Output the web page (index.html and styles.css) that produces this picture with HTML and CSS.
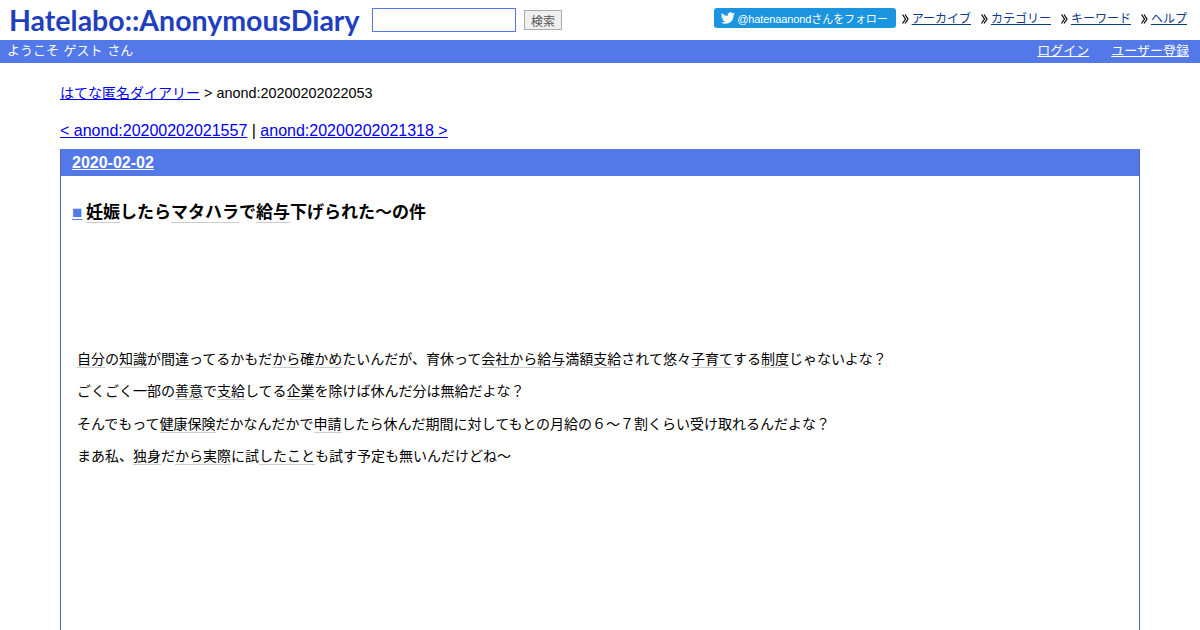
FILE: index.html
```html
<!DOCTYPE html>
<html lang="ja">
<head>
<meta charset="UTF-8">
<title>anond:20200202022053</title>
<link rel="stylesheet" href="styles.css">
</head>
<body>
<div class="top">
  <div class="top-left">
    <a class="logo" href="#">Hatelabo::AnonymousDiary</a>
    <form class="search">
      <input class="search-text" type="text">
      <button class="search-btn" type="button">検索</button>
    </form>
  </div>
  <div class="top-right">
    <a class="follow" href="#">
      <svg class="bird" viewBox="0 0 24 24"><path d="M23.6 4.6c-.9.4-1.8.7-2.8.8 1-.6 1.8-1.5 2.1-2.7-.9.6-2 1-3.1 1.2A4.9 4.9 0 0 0 11.4 8.400C7.400 8.200 3.800 6.300 1.400 3.300c-1.300 2.200-.7 5.100 1.500 6.500-.8 0-1.500-.2-2.200-.6 0 2.300 1.600 4.400 3.900 4.900-.7.2-1.500.2-2.200.1.600 2 2.400 3.400 4.600 3.400A9.900 9.900 0 0 1 0 19.600 14 14 0 0 0 7.500 21.800c9.100 0 14.300-7.700 14-14.600 1-.7 1.800-1.600 2.100-2.600z"/></svg>
      <span>@hatenaanondさんをフォロー</span>
    </a>
    <ul class="menu">
      <li><svg class="arrow" viewBox="0 0 7 10"><path d="M.5 .5L3.500 5 .5 9.500M3 .5L6 5 3 9.500"/></svg><a href="#">アーカイブ</a></li>
      <li><svg class="arrow" viewBox="0 0 7 10"><path d="M.5 .5L3.500 5 .5 9.500M3 .5L6 5 3 9.500"/></svg><a href="#">カテゴリー</a></li>
      <li><svg class="arrow" viewBox="0 0 7 10"><path d="M.5 .5L3.500 5 .5 9.500M3 .5L6 5 3 9.500"/></svg><a href="#">キーワード</a></li>
      <li><svg class="arrow" viewBox="0 0 7 10"><path d="M.5 .5L3.500 5 .5 9.500M3 .5L6 5 3 9.500"/></svg><a href="#">ヘルプ</a></li>
    </ul>
  </div>
</div>
<div class="band">
  <span>ようこそ ゲスト さん</span>
  <div class="band-links">
    <a href="#">ログイン</a>
    <a href="#">ユーザー登録</a>
  </div>
</div>
<div class="body">
  <p class="crumb"><a href="#">はてな匿名ダイアリー</a> &gt; anond:20200202022053</p>
  <p class="pager"><a href="#">&lt; anond:20200202021557</a> | <a href="#">anond:20200202021318 &gt;</a></p>
  <div class="day">
    <h2 class="day-title"><a href="#">2020-02-02</a></h2>
    <div class="day-body">
      <h3 class="entry-title"><a class="mark" href="#">■</a> <span class="kw">妊娠</span>したら<span class="kw">マタハラ</span>で<span class="kw">給与</span>下げられた～の件</h3>
      <div class="ad"></div>
      <p><span class="kw">自分</span>の<span class="kw">知識</span>が間違ってるかもだ<span class="kw">から</span>確<span class="kw">かめ</span>たいんだが、育休って<span class="kw">会社</span><span class="kw">から</span><span class="kw">給与</span>満額<span class="kw">支給</span>されて悠々<span class="kw">子育て</span>する<span class="kw">制度</span>じゃないよな？</p>
      <p>ごくごく一部の<span class="kw">善意</span>で<span class="kw">支給</span>してる<span class="kw">企業</span>を除けば休んだ分は無給だよな？</p>
      <p>そんでもって<span class="kw">健康保険</span>だかなんだかで<span class="kw">申請</span>したら休んだ期間に対してもとの月給の６～７割くらい受け取れるんだよな？</p>
      <p>まあ私、<span class="kw">独身</span>だ<span class="kw">から</span><span class="kw">実際</span>に試<span class="kw">したこと</span>も試す予定も無いんだけどね～</p>
    </div>
  </div>
</div>
</body>
</html>
```

FILE: styles.css
```css
body {
  margin: 0;
  background: #fff;
  color: #000;
  font-family: "Liberation Sans", "Noto Sans CJK JP", sans-serif;
  font-size: 14px;
}
.top {
  display: flex;
  justify-content: space-between;
  height: 40px;
  padding: 8px 13px 0 9px;
  box-sizing: border-box;
}
.top-left,
.top-right {
  display: flex;
  align-items: flex-start;
}
.logo {
  width: 349px;
  font-family: "Lato", sans-serif;
  font-size: 28.5px;
  font-weight: 700;
  line-height: 24px;
  color: #1f3fbf;
  text-decoration: none;
  white-space: nowrap;
}
.search {
  display: flex;
  align-items: center;
  margin-left: 14px;
}
.search-text {
  width: 144px;
  height: 24px;
  padding: 0;
  box-sizing: border-box;
  border: 1px solid #5279e7;
}
.search-btn {
  width: 38px;
  height: 20px;
  margin-left: 8px;
  padding: 0;
  border: 1px solid #aaa;
  background: #efefef;
  color: #555;
  font-family: inherit;
  font-size: 12px;
}
.follow {
  display: flex;
  align-items: center;
  height: 20px;
  padding: 0 8px 0 7px;
  border-radius: 3px;
  background: #1b95e0;
  color: #fff;
  font-size: 11px;
  letter-spacing: -0.1px;
  text-decoration: none;
}
.bird {
  width: 14px;
  height: 14px;
  margin-right: 2px;
  fill: #fff;
}
.menu {
  display: flex;
  gap: 10px;
  margin: 0 0 0 6px;
  padding: 1px 0 0;
  list-style: none;
  font-size: 12px;
  line-height: 20px;
}
.menu li {
  display: flex;
  align-items: center;
}
.menu a {
  color: #0b3a8c;
}
.arrow {
  width: 7px;
  height: 10px;
  margin-right: 3px;
  fill: none;
  stroke: #000;
  stroke-width: 1.2;
}
.band {
  display: flex;
  justify-content: space-between;
  height: 23px;
  padding: 0 11px 0 7px;
  background: #5279e7;
  color: #fff;
  font-size: 13px;
  line-height: 22px;
  word-spacing: 1px;
}
.band-links {
  display: flex;
  gap: 22px;
}
.band a {
  color: #fff;
}
.body {
  padding: 21px 60px 0;
}
.crumb {
  margin: 0;
  font-size: 14.4px;
  line-height: 18px;
}
.crumb a {
  font-size: 14px;
}
.pager {
  margin: 19px 0 0;
  font-size: 16px;
  line-height: 20px;
}
.day {
  margin-top: 8px;
  min-height: 600px;
  border: 1px solid #5566c8;
  border-top-color: #5279e7;
}
.day-title {
  margin: 0;
  padding: 0 11px;
  height: 26px;
  background: #5279e7;
  font-size: 16px;
  line-height: 26px;
}
.day-title a {
  color: #fff;
}
.day-body {
  padding: 25px 16px 0;
}
.entry-title {
  margin: 0 0 0 -5px;
  font-size: 17px;
  line-height: 24px;
  word-spacing: -1px;
}
.mark {
  color: #5279e7;
}
.kw {
  border-bottom: 1px solid #ccc;
}
.ad {
  height: 124px;
}
.day-body p {
  margin: 0 0 12.4px;
  line-height: 20px;
}
```
